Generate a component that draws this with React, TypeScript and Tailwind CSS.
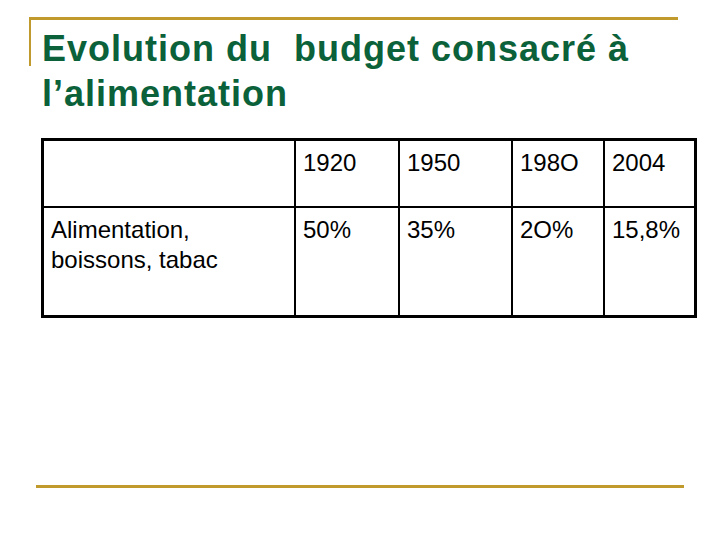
import React from "react";

const font = { fontFamily: '"Liberation Sans", Arial, sans-serif' };

export default function App() {
  const years = ["1920", "1950", "198O", "2004"];
  const vals = ["50%", "35%", "2O%", "15,8%"];
  const widths = ["w-[104px]", "w-[113px]", "w-[92px]", "w-[91px]"];
  return (
    <div className="w-[720px] h-[540px] bg-white flex flex-col" style={font}>
      <div className="ml-[29px] mt-[17px] w-[649px] h-[49px] border-t-[3px] border-l-[2px] border-[#c09a2c]">
        <h1 className="pl-[11px] pt-[6px] text-[36px] leading-[45px] font-bold text-[#0b6139] tracking-[1px] whitespace-nowrap">
          Evolution du&nbsp; budget consacré à
          <br />
          l’alimentation
        </h1>
      </div>
      <div className="ml-[41px] mt-[72px] w-[656px] border-[3px] border-black flex flex-col text-black text-[24px] leading-[30px]">
        <div className="flex h-[65px]">
          <div className="w-[250px]" />
          {years.map((y, i) => (
            <div key={y} className={`${widths[i]} border-l-2 border-black pl-[7px] pt-[7px]`}>
              {y}
            </div>
          ))}
        </div>
        <div className="flex h-[109px] border-t-2 border-black">
          <div className="w-[250px] pl-[7px] pt-[7px]">
            Alimentation,
            <br />
            boissons, tabac
          </div>
          {vals.map((v, i) => (
            <div key={v} className={`${widths[i]} border-l-2 border-black pl-[7px] pt-[7px]`}>
              {v}
            </div>
          ))}
        </div>
      </div>
      <div className="ml-[36px] mt-[167px] w-[648px] h-[3px] bg-[#c09a2c]" />
    </div>
  );
}
